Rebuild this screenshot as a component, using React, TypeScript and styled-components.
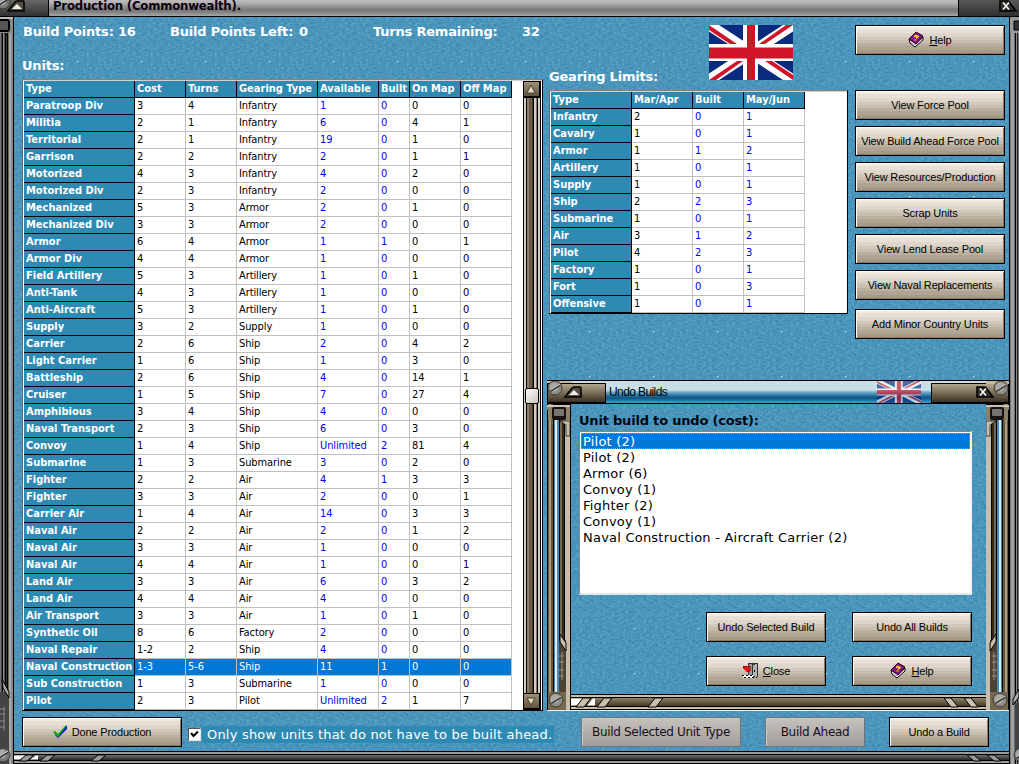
import React from 'react';
import styled, { createGlobalStyle, css } from 'styled-components';

const tahoma = `'DejaVu Sans Condensed', 'DejaVu Sans', sans-serif`;
const verdana = `'DejaVu Sans', sans-serif`;
const arial = `'Liberation Sans', sans-serif`;

const tile = encodeURIComponent(
  `<svg xmlns='http://www.w3.org/2000/svg' width='64' height='45'><filter id='n' x='0' y='0' width='100%' height='100%' color-interpolation-filters='sRGB'><feTurbulence type='fractalNoise' baseFrequency='0.35 0.5' numOctaves='3' seed='4' stitchTiles='stitch'/><feColorMatrix values='0.24 0.06 0 0 0.145  0.18 0.06 0 0 0.465  0.12 0.06 0 0 0.645  0 0 0 0 1'/></filter><rect width='64' height='45' filter='url(#n)'/><rect x='63' y='44' width='1' height='1' fill='#fff'/></svg>`
);

const texture = css`
  background: #4b94bf url("data:image/svg+xml,${tile}");
`;

const GlobalStyle = createGlobalStyle`
  * {
    box-sizing: border-box;
  }
  body {
    margin: 0;
    overflow: hidden;
    background: #333;
  }
`;

const SWindow = styled.div`
  position: relative;
  display: grid;
  grid-template: 17px 1fr 13px / 14px 1fr 10px;
  width: 1019px;
  height: 764px;
  overflow: hidden;
`;

const STitleBar = styled.header`
  grid-column: 1 / -1;
  display: flex;
  justify-content: space-between;
  border-bottom: 1px solid #000;
  background: linear-gradient(#bdbdbd, #b2b2b2 3px, #777 10px, #808080 12px, #a8a8a8);
`;

const STitle = styled.h1`
  flex: 1;
  margin: 0;
  padding-left: 4px;
  font: bold 13px/11px ${tahoma};
  letter-spacing: -0.2px;
  color: #0b0010;
`;

const SCorner = styled.svg`
  display: block;
  flex: none;
`;

const SContent = styled.main`
  display: grid;
  grid-template: 694px 1fr / 521px 299px 150px;
  column-gap: 6px;
  padding-left: 8px;
  ${texture}
`;

const SColumn = styled.section`
  display: flex;
  flex-direction: column;
`;

const SLabel = styled.span<{ $width?: number }>`
  display: inline-block;
  flex: none;
  width: ${(p) => (p.$width ? `${p.$width}px` : 'auto')};
  font: bold 13px/16px ${verdana};
  letter-spacing: -0.2px;
  white-space: nowrap;
  color: #fff;
`;

const SUnitsLabel = styled(SLabel)`
  height: 28px;
  padding-top: 7px;
`;

const SSummary = styled.div`
  display: flex;
  flex: none;
  height: 34px;
  padding: 7px 0 0 1px;
`;

const STable = styled.div`
  display: flex;
  flex: none;
  justify-content: space-between;
  padding: 1px 1px 0 1px;
  border: 1px solid #000;
  border-top-color: #8a8078;
  border-left-color: #716862;
  background: #fff;
  box-shadow: inset 0 1px #d8d0c8;
`;

const SRow = styled.div<{ $cols: string; $selected?: boolean }>`
  display: grid;
  grid-template-columns: ${(p) => p.$cols};
  height: 17px;
  ${(p) =>
    p.$selected &&
    css`
      span {
        color: #fff;
        background: #0078d7;
      }
    `}
`;

const SHead = styled.b`
  padding-left: 2px;
  border: solid #000;
  border-width: 0 1px 1px 0;
  font: bold 11px/16px ${tahoma};
  white-space: nowrap;
  color: #fff;
  background: #2f8ab3;
`;

const SCell = styled.span<{ $blue?: boolean }>`
  padding-left: 2px;
  border: solid #c0c0c0;
  border-width: 0 1px 1px 0;
  font: 11px/16px ${tahoma};
  letter-spacing: -0.1px;
  white-space: nowrap;
  color: ${(p) => (p.$blue ? '#0000f0' : '#000')};
`;

const SScroll = styled.div`
  display: flex;
  flex-direction: column;
  align-items: center;
  justify-content: space-between;
  width: 18px;
  background: linear-gradient(
    90deg, #000 1px, #d6cdbd 1px 3px, #000 3px 4px, #8d8068 4px 6px, #6b5c48 6px 9px,
    #463a2c 9px 10px, #000 10px 11px, #d6cdbd 11px 13px, #777 13px 14px, #000 14px 15px,
    #d6cdbd 15px 17px, #000 17px
  );
`;

const SThumb = styled.div`
  width: 14px;
  height: 16px;
  border: 1px solid #000;
  border-radius: 2px;
  background: linear-gradient(135deg, #fff, #c9c1b6);
`;

const SButton = styled.button<{ $width?: number }>`
  display: flex;
  flex: none;
  align-items: center;
  justify-content: center;
  gap: 4px;
  width: ${(p) => p.$width || 150}px;
  height: 30px;
  padding: 0 0 1px;
  border: 1px solid #000;
  font: 11px ${arial};
  letter-spacing: -0.15px;
  white-space: nowrap;
  color: #000;
  background: linear-gradient(
    #f2ebe2 3px, #e8e0d6 3px 7px, #ded6ca 7px 11px, #d1c8bb 11px 14px, #c8beae 14px 17px,
    #bbb09f 17px 20px, #b0a592 20px 24px, #a69a86 24px
  );
  box-shadow: inset 1px 1px #fffaf2, inset -1px -1px #857868;

  &:disabled {
    border-color: #6f7376;
    font: 12px ${verdana};
    letter-spacing: -0.32px;
    color: #15101a;
    background: linear-gradient(#c6c2be, #b5afab 50%, #a29d9b);
    box-shadow: inset 1px 1px #ccc8c3;
  }
`;

const SButtons = styled.nav`
  display: flex;
  flex-direction: column;
  gap: 6px;
  padding: 8px 0 0;
  margin-left: 1px;
  width: 150px;

  ${SButton}:first-child {
    margin-bottom: 29px;
  }
  ${SButton}:last-child {
    margin-top: 3px;
  }
`;

const SGearingHead = styled.div`
  display: flex;
  flex: none;
  align-items: flex-end;
  justify-content: space-between;
  height: 73px;
  padding: 0 55px 5px 0;

  svg {
    margin-bottom: 5px;
  }
`;

const SFooter = styled.footer`
  grid-column: 1 / -1;
  display: flex;
  padding-top: 6px;
`;

const SBuildAhead = styled(SButton)`
  margin: 0 24px;
`;

const SCheck = styled.label`
  display: flex;
  align-items: center;
  height: 17px;
  width: 367px;
  margin: 9px 26px 0 6px;
  font: 13px/17px ${verdana};
  letter-spacing: 0.2px;
  white-space: nowrap;
  color: #fff;

  span {
    padding: 0 2px 0 5px;
    background: #2f8ab3;
  }
`;

const SBox = styled.i`
  display: block;
  flex: none;
  width: 13px;
  height: 13px;
  margin-right: 1px;
  border: 1px solid #555;
  border-right-color: #e8e4e0;
  border-bottom-color: #e8e4e0;
  background: #fff;
`;

const SRail = styled.div<{ $right?: boolean }>`
  grid-row: 2 / 4;
  grid-column: ${(p) => (p.$right ? 3 : 1)};
  z-index: 1;
  overflow: hidden;
  background: ${(p) =>
    p.$right
      ? 'linear-gradient(90deg, #000 1px, #777 1px 2px, #a0a0a0 2px 5px, #6c6c6c 5px 6px, #000 6px 7px, #8a8a8a 7px 8px, #222 8px 9px, #777 9px)'
      : 'linear-gradient(90deg, #777 1px, #444 1px 2px, #000 2px 3px, #8a8a8a 3px 4px, #555 4px 5px, #000 5px 6px, #333 6px 7px, #000 7px 8px, #666 8px 9px, #aaa 9px 11px, #8a8a8a 11px 13px, #000 13px)'};
`;

const SBottomRail = styled.div`
  grid-row: 3;
  grid-column: 2 / -1;
  overflow: hidden;
`;

const SDialog = styled.section`
  position: absolute;
  left: 547px;
  top: 380px;
  display: grid;
  grid-template: 24px 1fr 16px / 24px 1fr 23px;
  width: 462px;
  height: 331px;
  border-bottom: 1px solid #e4f2fa;
`;

const SDialogBar = styled.header`
  grid-column: 1 / -1;
  display: flex;
  border: solid #000;
  border-width: 1px 0;
  font: 12px/22px ${arial};
  letter-spacing: -0.6px;
  color: #000;
  background: linear-gradient(#c9dfe8 9px, #76acc8 11px, #1d6c9f 15px, #0d5482 17px, #2d80b0 20px, #529fca);
`;

const SDialogTitle = styled.span`
  flex: 1;
  padding-left: 3px;
`;

const SDialogFlag = styled.div`
  width: 54px;
  opacity: 0.65;
`;

const SDialogBody = styled.div`
  grid-row: 2;
  grid-column: 2;
  padding: 9px 0 0 8px;
  ${texture}
`;

const SDialogHeading = styled.h2`
  margin: 0 0 2px;
  font: bold 13px/16px ${verdana};
  letter-spacing: -0.2px;
  color: #000814;
`;

const SList = styled.div`
  width: 393px;
  height: 164px;
  padding: 1px 0 0 1px;
  border: 1px solid #8b8580;
  border-right: 2px solid #f5f5f5;
  border-bottom: 2px solid #e6e6e6;
  font: 13px/18px ${verdana};
  letter-spacing: 0.22px;
  color: #000;
  background: #fff;
`;

const SItem = styled.div<{ $selected?: boolean }>`
  height: 16px;
  padding-left: 2px;
  ${(p) =>
    p.$selected &&
    css`
      color: #fff;
      background: #0078d7;
      outline: 1px dotted #e8893a;
      outline-offset: -1px;
    `}
`;

const SDialogButtons = styled.div`
  display: grid;
  grid-template-columns: 120px 120px;
  gap: 14px 26px;
  padding: 17px 0 0 127px;
`;

const SDialogRail = styled.div`
  grid-row: 2 / 4;
  overflow: hidden;
`;

const UnionJack = ({ width, height }: { width: number; height: number }) => (
  <SCorner width={width} height={height} viewBox='0 0 84 55' preserveAspectRatio='none'>
    <path fill='#0a2a80' d='M0 0h84v55H0z' />
    <path stroke='#fff' strokeWidth='11' d='M0 0l84 55M84 0L0 55' />
    <path fill='#d01528' d='M0 0l28 19h-7L0 5zM84 0h-7L50 19h6zM84 55l-28-19h7l21 14zM0 55h7l27-19h-6z' />
    <path fill='#fff' d='M34 0h15v55H34zM0 19h84v17H0z' />
    <path fill='#d01528' d='M38 0h8v55h-8zM0 22.5h84v11H0z' />
  </SCorner>
);

const BookIcon = () => (
  <svg width='17' height='17' viewBox='0 0 17 17'>
    <path fill='#fff' stroke='#000' d='M1 8l1 4 5 4 8-7V6l-7 6z' />
    <path stroke='#aaa' d='M3 11l4 3 7-6' fill='none' />
    <path fill='#8a0f8a' stroke='#220022' d='M1 8l7-7 7 4-7 8z' />
    <path fill='none' stroke='#ffee00' strokeWidth='1.5' d='M6 5.5l2-1 2 1-2 2' />
    <path fill='#ffee00' d='M6.5 8.5h2v1h-2z' />
  </svg>
);

const DoorIcon = () => (
  <svg width='17' height='17' viewBox='0 0 17 17' shapeRendering='crispEdges'>
    <path fill='#333' d='M6 1h10v14H6z' />
    <path fill='#999' d='M7 2h3v11H7z' />
    <path fill='#b4b4b4' d='M11 3l4-1v13l-4-1z' />
    <path fill='#000' d='M12 8h1v2h-1z' />
    <path fill='#f01008' stroke='#400' strokeWidth='.5' d='M1 4h3l1 1 3-1v5l-3 1-4-4z' />
    <path fill='#fff' d='M1 13h10v3H1z' />
    <path stroke='#000' strokeDasharray='2 2' d='M0 13.5h11M2 15.5h13' />
  </svg>
);

const CheckIcon = () => (
  <svg width='15' height='14' viewBox='0 0 15 14'>
    <path fill='#0a1bb8' d='M2 8l3 3 8-10h1v3L5 13 2 10z' />
    <path fill='#07a80c' d='M0 7l2-1 3 3 7-8 2-1-9 12z' />
  </svg>
);

const Screw = ({ x, y, gray }: { x: number; y: number; gray?: boolean }) => (
  <g>
    <circle cx={x} cy={y} r='7' fill={gray ? '#777' : '#918d86'} stroke='#3d3933' />
    <circle cx={x - 1} cy={y - 1} r='4.5' fill='#aaa8a4' />
    <path stroke='#3c3c3c' strokeWidth='2.5' d={`M${x - 5} ${y + 3}l10-6`} />
    <path stroke='#ddd' d={`M${x - 5} ${y + 2}l10-6`} />
  </g>
);

// collapse button when up, close button otherwise
const Knob = ({ x, y, up }: { x: number; y: number; up?: boolean }) => (
  <g transform={`translate(${x} ${y})`}>
    {up ? (
      <>
        <path fill='#544d43' stroke='#000' strokeWidth='1.5' d='M1 11l7-9q1-1 3-1h5q1 0 1 1v9z' />
        <path fill='#f1ede6' d='M5 9l5-5 5 5z' />
      </>
    ) : (
      <>
        <path fill='#35312b' stroke='#000' strokeWidth='1.5' d='M1 1h7q2 0 3 2l6 8H1z' />
        <path stroke='#fff' strokeWidth='1.5' d='M4 2.5l6 7M10 2.5L4 9.5' />
      </>
    )}
  </g>
);

const Metal = ({ id, top, bottom }: { id: string; top: string; bottom: string }) => (
  <linearGradient id={id} x2='0' y2='1'>
    <stop stopColor={top} />
    <stop offset='1' stopColor={bottom} />
  </linearGradient>
);

const BottomTrim = ({ width, height, tan }: { width: number; height: number; tan?: boolean }) => {
  const light = tan ? '#c9c0ae' : '#9b9b9b';
  const id = tan ? 'trim-tan' : 'trim-gray';
  return (
    <SCorner width={width} height={height}>
      <Metal id={id} top={tan ? '#8e8266' : '#6d706e'} bottom={tan ? '#44392c' : '#262828'} />
      <path fill='#000' d={`M0 0h${width}v${height}H0z`} />
      <path fill={light} d={`M0 1h${width}v2H0zM0 ${height - 3}h${width}v2H0z`} />
      <path fill={`url(#${id})`} d={`M0 4h${width}v${height - 8}H0z`} />
      <path fill='#fff' d={`M0 4.5h12l-6 ${height - 9}H0zM24 4.5h-2l-6 ${height - 9}h8z`} />
      {[12, 33, 84, width - 42, width - 22].map((x, i) => (
        <path
          key={x}
          fill={light}
          stroke='#000'
          d={i < 3 ? `M${x} 4h8l-7 ${height - 7}h-8z` : `M${x} 4h7l7 ${height - 7}h-7z`}
        />
      ))}
    </SCorner>
  );
};

const DialogRail = ({ right }: { right?: boolean }) => (
  <SDialogRail>
    <SCorner width={right ? 23 : 24} height='307'>
      <g transform={right ? 'translate(23 0) scale(-1 1)' : undefined}>
        <path fill='#000' d='M0 0h24v307H0z' />
        <path fill='#635741' d='M1 0h5v307H1z' />
        <path fill='#a79b7b' d='M2 0h2v307H2z' />
        <path fill='#4a88b5' d='M7 14h5v280H7z' />
        <path fill='#d9ecf8' d='M8 14h2v279H8z' />
        <path fill='#76684e' d='M13 14h4v290h-4z' />
        <path fill='#332b20' d='M15 14h2v290h-2z' />
        <path fill='#c8bead' d='M18 14h5v293h-5z' />
        <path fill='#8b806b' d='M0 1h23v15h-4l-2 3-3-3H1V6H0z' />
        <path fill='#cdc3b3' d='M0 1h23v2H0z' />
        <rect x='5' y='3' width='14' height='13' rx='2' fill='#18130e' />
        <rect x='7' y='5' width='10' height='7' rx='1' fill='#77736e' />
        <path fill='#c8bead' stroke='#000' strokeWidth='.7' d='M13 17h10v15h-4V21l-3-2z' />
        <path fill='#4a4335' d='M12 236h7v54h-7z' />
        <path fill='#c8bead' stroke='#000' d='M13 230l6 9v8l-6-9z' />
        <path stroke='#999080' d='M12 252h5M12 258h5M12 266h5M12 272h5M15 248v28' />
        <path fill='#77694e' d='M1 288h18v18H1z' />
        <path fill='#c8bead' d='M20 234h3v73h-3z' />
      </g>
      <Screw x={right ? 14 : 9} y={296} />
    </SCorner>
  </SDialogRail>
);

const OuterRail = ({ right }: { right?: boolean }) => (
  <SRail $right={right}>
    <SCorner width={right ? 10 : 14} height='747'>
      {right ? (
        <>
          <path fill='#999' d='M1 0h9v16H1z' />
          <path fill='#333' stroke='#000' d='M5 4h8v9H5z' />
          <path fill='#444' d='M6 686h4v56H6z' />
          <path fill='#aaa' stroke='#000' d='M10 672l-6 10v6l6-8z' />
          <Screw x={12} y={738} gray />
        </>
      ) : (
        <>
          <path fill='#888' d='M0 0h13v16H0z' />
          <path fill='#bbb' d='M0 0h13v2H0z' />
          <rect x='-4' y='3' width='13' height='11' rx='2' fill='#555' stroke='#000' strokeWidth='2' />
          <path fill='#444' d='M0 675h9v72H0z' />
          <path fill='#aaa' stroke='#000' d='M2 662l7 13v6l-6-10z' />
          <path stroke='#888' d='M0 692h5M0 697h5M0 704h5M0 710h5M4 690v24' />
          <Screw x={3} y={738} gray />
        </>
      )}
    </SCorner>
  </SRail>
);

const unitCols = '111px 51px 51px 81px 61px 31px 51px 51px';
const gearCols = '81px 61px 51px 61px';

const unitHeads = ['Type', 'Cost', 'Turns', 'Gearing Type', 'Available', 'Built', 'On Map', 'Off Map'];
const gearHeads = ['Type', 'Mar/Apr', 'Built', 'May/Jun'];

const units = `Paratroop Div,3,4,Infantry,1,0,0,0
Militia,2,1,Infantry,6,0,4,1
Territorial,2,1,Infantry,19,0,1,0
Garrison,2,2,Infantry,2,0,1,1
Motorized,4,3,Infantry,4,0,2,0
Motorized Div,2,3,Infantry,2,0,0,0
Mechanized,5,3,Armor,2,0,1,0
Mechanized Div,3,3,Armor,2,0,0,0
Armor,6,4,Armor,1,1,0,1
Armor Div,4,4,Armor,1,0,0,0
Field Artillery,5,3,Artillery,1,0,1,0
Anti-Tank,4,3,Artillery,1,0,0,0
Anti-Aircraft,5,3,Artillery,1,0,1,0
Supply,3,2,Supply,1,0,0,0
Carrier,2,6,Ship,2,0,4,2
Light Carrier,1,6,Ship,1,0,3,0
Battleship,2,6,Ship,4,0,14,1
Cruiser,1,5,Ship,7,0,27,4
Amphibious,3,4,Ship,4,0,0,0
Naval Transport,2,3,Ship,6,0,3,0
Convoy,1,4,Ship,Unlimited,2,81,4
Submarine,1,3,Submarine,3,0,2,0
Fighter,2,2,Air,4,1,3,3
Fighter,3,3,Air,2,0,0,1
Carrier Air,1,4,Air,14,0,3,3
Naval Air,2,2,Air,2,0,1,2
Naval Air,3,3,Air,1,0,0,0
Naval Air,4,4,Air,1,0,0,1
Land Air,3,3,Air,6,0,3,2
Land Air,4,4,Air,4,0,0,0
Air Transport,3,3,Air,1,0,1,0
Synthetic Oil,8,6,Factory,2,0,0,0
Naval Repair,1-2,2,Ship,4,0,0,0
Naval Construction,1-3,5-6,Ship,11,1,0,0
Sub Construction,1,3,Submarine,1,0,0,0
Pilot,2,3,Pilot,Unlimited,2,1,7`
  .split('\n')
  .map((line) => line.split(','));

const gearing = [
  ['Infantry', '2', '0', '1'],
  ['Cavalry', '1', '0', '1'],
  ['Armor', '1', '1', '2'],
  ['Artillery', '1', '0', '1'],
  ['Supply', '1', '0', '1'],
  ['Ship', '2', '2', '3'],
  ['Submarine', '1', '0', '1'],
  ['Air', '3', '1', '2'],
  ['Pilot', '4', '2', '3'],
  ['Factory', '1', '0', '1'],
  ['Fort', '1', '0', '3'],
  ['Offensive', '1', '0', '1'],
];

const builds = [
  'Pilot (2)',
  'Pilot (2)',
  'Armor (6)',
  'Convoy (1)',
  'Fighter (2)',
  'Convoy (1)',
  'Naval Construction - Aircraft Carrier (2)',
];

const menu = [
  'View Force Pool',
  'View Build Ahead Force Pool',
  'View Resources/Production',
  'Scrap Units',
  'View Lend Lease Pool',
  'View Naval Replacements',
  'Add Minor Country Units',
];

interface GridProps {
  cols: string;
  heads: string[];
  rows: string[][];
  blue: number[];
  selected?: string;
}

const Grid = ({ cols, heads, rows, blue, selected }: GridProps) => (
  <div>
    <SRow $cols={cols}>
      {heads.map((head) => (
        <SHead key={head}>{head}</SHead>
      ))}
    </SRow>
    {rows.map(([name, ...cells], i) => (
      <SRow key={i} $cols={cols} $selected={name === selected}>
        <SHead>{name}</SHead>
        {cells.map((cell, j) => (
          <SCell key={j} $blue={blue.includes(j + 1)}>
            {cell}
          </SCell>
        ))}
      </SRow>
    ))}
  </div>
);

const ScrollArrow = ({ down }: { down?: boolean }) => (
  <SCorner width='18' height='17'>
    <Metal id={down ? 'arrow-down' : 'arrow-up'} top='#a09279' bottom='#5f523f' />
    <path fill='#000' d='M0 0h18v17H0z' />
    <path fill={`url(#${down ? 'arrow-down' : 'arrow-up'})`} d='M1 1h15v14H1z' />
    <path fill='#e3d9bd' stroke='#4b402f' d={down ? 'M4 5h8l-4 7z' : 'M4 12h8L8 4z'} />
  </SCorner>
);

const HelpLabel = () => (
  <>
    <BookIcon />
    <span>
      <u>H</u>elp
    </span>
  </>
);

const UndoDialog = () => (
  <SDialog>
    <SDialogBar>
      <SCorner width='59' height='22'>
        <Metal id='tan-left' top='#b3a78f' bottom='#3c3122' />
        <path fill='#000' d='M0 2h59v20H0z' />
        <path fill='#c3b9a5' d='M1 0h22l3 2H1z' />
        <path fill='url(#tan-left)' d='M1 3h57v18H1z' />
        <Screw x={8} y={7} />
        <Knob x={17} y={5} up />
      </SCorner>
      <SDialogTitle>Undo Builds</SDialogTitle>
      <SDialogFlag>
        <UnionJack width={44} height={22} />
      </SDialogFlag>
      <SCorner width='78' height='22'>
        <Metal id='tan-right' top='#b3a78f' bottom='#3c3122' />
        <path fill='#000' d='M0 2h78v20H0z' />
        <path fill='#c3b9a5' d='M55 0h23v3H55z' />
        <path fill='url(#tan-right)' d='M1 3h76v18H1z' />
        <Knob x={45} y={5} />
        <Screw x={70} y={7} />
      </SCorner>
    </SDialogBar>
    <DialogRail />
    <SDialogBody>
      <SDialogHeading>Unit build to undo (cost):</SDialogHeading>
      <SList>
        {builds.map((build, i) => (
          <SItem key={i} $selected={i === 0}>
            {build}
          </SItem>
        ))}
      </SList>
      <SDialogButtons>
        <SButton $width={120}>Undo Selected Build</SButton>
        <SButton $width={120}>Undo All Builds</SButton>
        <SButton $width={120}>
          <DoorIcon />
          <span>
            <u>C</u>lose
          </span>
        </SButton>
        <SButton $width={120}>
          <HelpLabel />
        </SButton>
      </SDialogButtons>
    </SDialogBody>
    <DialogRail right />
    <BottomTrim width={415} height={16} tan />
  </SDialog>
);

const App = () => {
  return (
    <>
      <GlobalStyle />
      <SWindow>
        <STitleBar>
          <SCorner width='49' height='16'>
            <Metal id='gray-left' top='#686868' bottom='#303030' />
            <path fill='url(#gray-left)' d='M0 0h48v16H0z' />
            <path fill='#000' d='M48 0h1v16h-1z' />
            <Screw x={3} y={2} gray />
            <Knob x={7} y={0} up />
          </SCorner>
          <STitle>Production (Commonwealth).</STitle>
          <SCorner width='61' height='16'>
            <Metal id='gray-right' top='#585858' bottom='#303030' />
            <path fill='url(#gray-right)' d='M0 0h61v16H0z' />
            <path fill='#000' d='M0 0h1v16H0z' />
            <Knob x={41} y={0} />
          </SCorner>
        </STitleBar>
        <OuterRail />
        <SContent>
          <SColumn>
            <SSummary>
              <SLabel $width={147}>Build Points: 16</SLabel>
              <SLabel $width={129}>Build Points Left:</SLabel>
              <SLabel $width={74}>0</SLabel>
              <SLabel $width={149}>Turns Remaining:</SLabel>
              <SLabel>32</SLabel>
            </SSummary>
            <SUnitsLabel>Units:</SUnitsLabel>
            <STable>
              <Grid
                cols={unitCols}
                heads={unitHeads}
                rows={units}
                blue={[4, 5]}
                selected='Naval Construction'
              />
              <SScroll>
                <ScrollArrow />
                <SThumb />
                <ScrollArrow down />
              </SScroll>
            </STable>
          </SColumn>
          <SColumn>
            <SGearingHead>
              <SLabel>Gearing Limits:</SLabel>
              <UnionJack width={84} height={55} />
            </SGearingHead>
            <STable>
              <Grid cols={gearCols} heads={gearHeads} rows={gearing} blue={[2, 3]} />
            </STable>
          </SColumn>
          <SButtons>
            <SButton>
              <HelpLabel />
            </SButton>
            {menu.map((item) => (
              <SButton key={item}>{item}</SButton>
            ))}
          </SButtons>
          <SFooter>
            <SButton $width={160}>
              <CheckIcon />
              Done Production
            </SButton>
            <SCheck>
              <SBox>
                <SCorner width='11' height='11'>
                  <path fill='none' stroke='#000' strokeWidth='2' d='M2 4l2.5 3L9 2.5' />
                </SCorner>
              </SBox>
              <span>Only show units that do not have to be built ahead.</span>
            </SCheck>
            <SButton $width={160} disabled>
              Build Selected Unit Type
            </SButton>
            <SBuildAhead $width={100} disabled>
              Build Ahead
            </SBuildAhead>
            <SButton $width={100}>Undo a Build</SButton>
          </SFooter>
        </SContent>
        <OuterRail right />
        <SBottomRail>
          <BottomTrim width={995} height={13} />
        </SBottomRail>
        <UndoDialog />
      </SWindow>
    </>
  );
};

export default App;
